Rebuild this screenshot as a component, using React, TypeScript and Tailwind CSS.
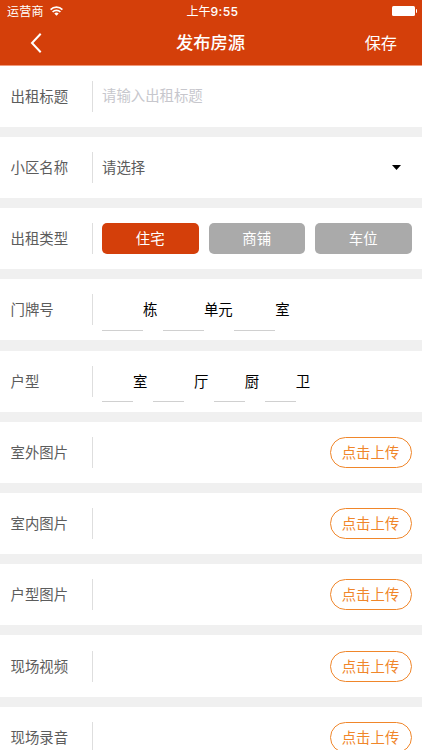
import { useState } from 'react'
import type { ReactNode } from 'react'

const uploads = ['室外图片', '室内图片', '户型图片', '现场视频', '现场录音']
const types = ['住宅', '商铺', '车位']

function StatusBar() {
    return (
        <div className="grid h-[22px] grid-cols-3 items-center pl-[7px] pr-[5px] text-[12px] leading-[22px]">
            <div className="-mt-px flex items-center gap-[6px]">
                <span className="tracking-[0.2px]">运营商</span>
                <svg className="-mt-px" width="13" height="10" viewBox="0 0 13 10" fill="none" stroke="white" strokeWidth="1.7">
                    <path d="M0.6 3.6a8.4 8.4 0 0 1 11.8 0" />
                    <path d="M2.6 6a5.4 5.4 0 0 1 7.8 0" />
                    <path d="M6.5 9.8 4.3 7.6a3.1 3.1 0 0 1 4.4 0z" fill="white" stroke="none" />
                </svg>
            </div>
            <div className="pl-px text-center">
                上午<span className="font-['Inter',sans-serif] text-[12.2px] font-medium tracking-[0.4px]">9:55</span>
            </div>
            <div className="-mt-[2px] flex items-center justify-end">
                <div className="h-[10px] w-[23px] rounded-[1.5px] bg-white"></div>
                <div className="ml-px h-[4px] w-px rounded-r bg-white"></div>
            </div>
        </div>
    )
}

function Header() {
    return (
        <div className="h-[66px] border-b border-[#f0997a] bg-[#d43f0a] text-white">
            <StatusBar />
            <div className="grid h-[42px] grid-cols-3 items-center">
                <svg className="ml-[30px]" width="12" height="20" viewBox="0 0 12 20" fill="none" stroke="white" strokeWidth="2">
                    <path d="M10.7 0.8 2 10l8.7 9.2" />
                </svg>
                <div className="-mt-[3px] pr-px text-center text-[17.3px] font-medium">发布房源</div>
                <div className="-mt-[3px] pr-[25px] text-right text-[16.2px]">保存</div>
            </div>
        </div>
    )
}

function Row({ label, children }: { label: string; children?: ReactNode }) {
    return (
        <div className="flex h-[61.1px] shrink-0 items-center bg-white pl-[10.5px] pr-[10.5px]">
            <div className="-mt-px w-[81.5px] text-[#5c5c5c]">{label}</div>
            <div className="h-[31px] w-px bg-[#dedede]"></div>
            <div className="ml-[9px] flex h-full flex-1 items-center">{children}</div>
        </div>
    )
}

function Blank({ className, unit }: { className: string; unit: string }) {
    return (
        <>
            <div className={'h-[51.5px] self-start border-b border-[#d0d0d0] ' + className}></div>
            <span className="-mt-px text-black">{unit}</span>
        </>
    )
}

export default function App() {
    const [type, setType] = useState('住宅')

    return (
        <div className="h-[750px] overflow-hidden bg-[#f0f0f0] font-['Noto_Sans_CJK_SC',sans-serif] text-[14.4px] leading-[22px]">
            <Header />
            <div className="-mt-[0.4px] flex flex-col gap-[10.15px]">
                <Row label="出租标题">
                    <span className="-mt-[2px] text-[#c7c7cd]">请输入出租标题</span>
                </Row>
                <Row label="小区名称">
                    <span className="-mt-px flex-1 text-[#5c5c5c]">请选择</span>
                    <svg className="mr-[11px]" width="9" height="5" viewBox="0 0 9 5">
                        <path d="M0 0h9L4.5 5z" />
                    </svg>
                </Row>
                <Row label="出租类型">
                    <div className="flex flex-1 gap-[10px]">
                        {types.map((item) => (
                            <div
                                key={item}
                                className={'h-[31px] flex-1 cursor-pointer rounded-[5px] text-center leading-[30px] text-white ' + (type === item ? 'bg-[#d43f0a]' : 'bg-[#aaa]')}
                                onClick={() => { setType(item) }}
                            >
                                {item}
                            </div>
                        ))}
                    </div>
                </Row>
                <Row label="门牌号">
                    <Blank className="w-[41px]" unit="栋" />
                    <Blank className="ml-[5.5px] w-[41px]" unit="单元" />
                    <Blank className="ml-[1.5px] w-[41px]" unit="室" />
                </Row>
                <Row label="户型">
                    <Blank className="w-[31px]" unit="室" />
                    <Blank className="mr-[10px] ml-[5.5px] w-[31px]" unit="厅" />
                    <Blank className="ml-[5.5px] w-[31px]" unit="厨" />
                    <Blank className="ml-[5.5px] w-[31px]" unit="卫" />
                </Row>
                {uploads.map((item) => (
                    <Row key={item} label={item}>
                        <div className="ml-auto h-[31px] w-[82px] cursor-pointer rounded-full border border-[#f0862a] text-center leading-[28px] text-[#f0862a]">点击上传</div>
                    </Row>
                ))}
            </div>
        </div>
    )
}
